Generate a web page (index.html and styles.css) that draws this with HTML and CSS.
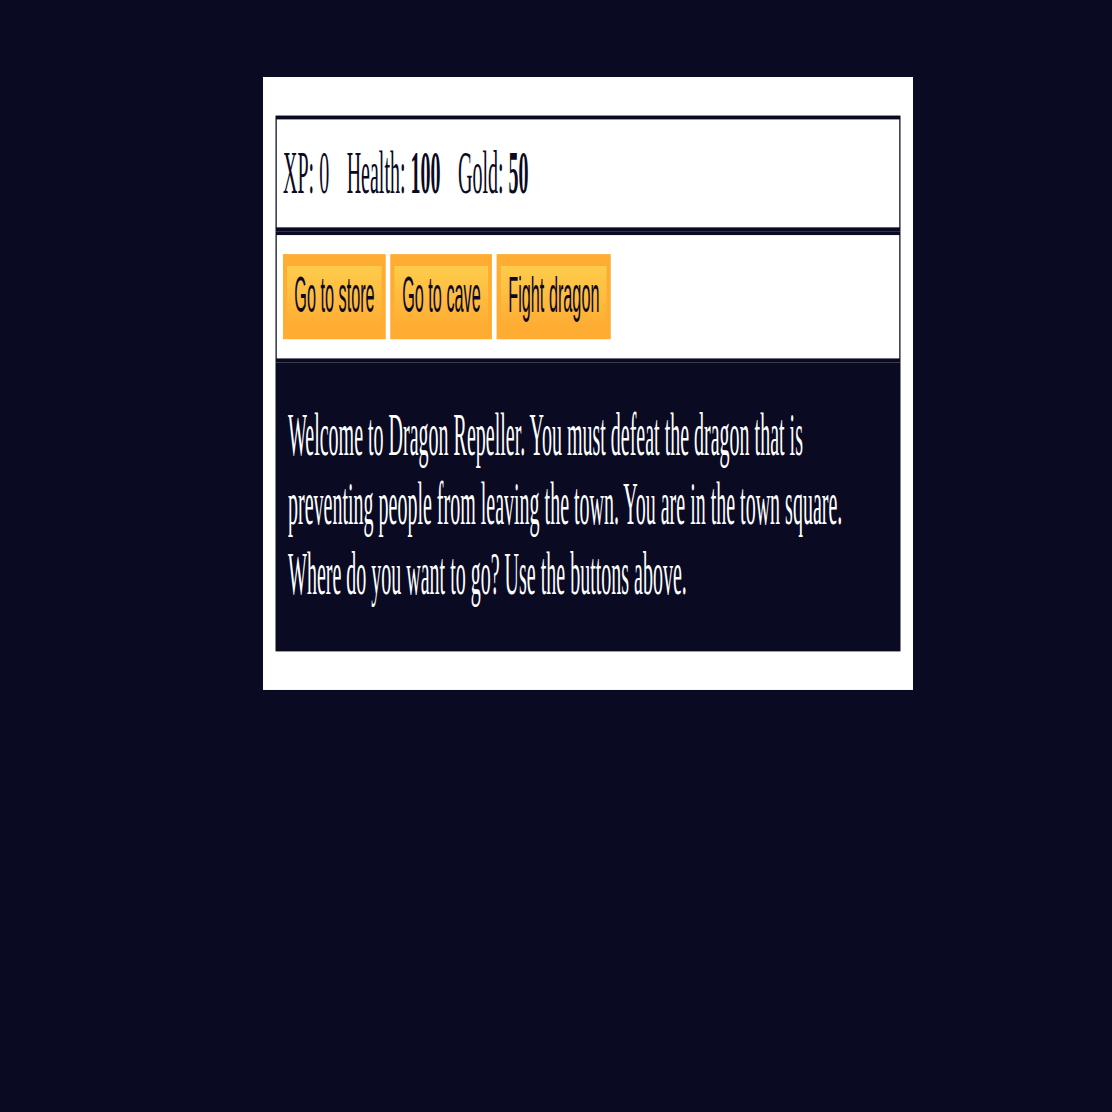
FILE: index.html
```html
<!DOCTYPE html>
<html lang="en">
<head>
<meta charset="utf-8">
<title>RPG - Dragon Repeller</title>
<link rel="stylesheet" href="styles.css">
</head>
<body>
<main class="stage">
  <div class="game">
    <div class="stats">
      <span class="stat">XP: <span class="value-plain">0</span></span>
      <span class="stat">Health: <strong>100</strong></span>
      <span class="stat">Gold: <strong>50</strong></span>
    </div>
    <div class="controls">
      <button class="btn">Go to store</button>
      <button class="btn">Go to cave</button>
      <button class="btn">Fight dragon</button>
    </div>
    <div class="text">Welcome to Dragon Repeller. You must defeat the dragon that is preventing people from leaving the town. You are in the town square. Where do you want to go? Use the buttons above.</div>
  </div>
</main>
</body>
</html>
```

FILE: styles.css
```css
html, body {
  margin: 0;
  padding: 0;
  background-color: #0a0a23;
}

body {
  font-family: "Liberation Serif", "Times New Roman", serif;
  font-size: 16px;
}

.stage {
  display: block;
  height: 1112px;
  padding: 77px 0 0 263px;
  box-sizing: border-box;
}

.game {
  box-sizing: content-box;
  width: 500px;
  padding: 9.7px 10px 9.8px;
  background-color: #ffffff;
  color: #ffffff;
  transform: scale(1.25, 3.855);
  transform-origin: 0 0;
}

.stats,
.controls {
  border: 1px solid #0a0a23;
  padding: 5px;
  color: #0a0a23;
}

.stat {
  padding-right: 10px;
}

.value-plain {
  font-weight: normal;
}

.btn {
  cursor: pointer;
  margin: 0;
  padding: 1px 6px;
  font-family: "Liberation Sans", Arial, sans-serif;
  font-size: 13px;
  line-height: 14.6px;
  color: #0a0a23;
  background-color: #feac32;
  background-image: linear-gradient(#fecc4c, #ffac33);
  border: 3px solid #feac32;
}

.text {
  background-color: #0a0a23;
  color: #ffffff;
  padding: 10px 10px 10.8px;
}
```
